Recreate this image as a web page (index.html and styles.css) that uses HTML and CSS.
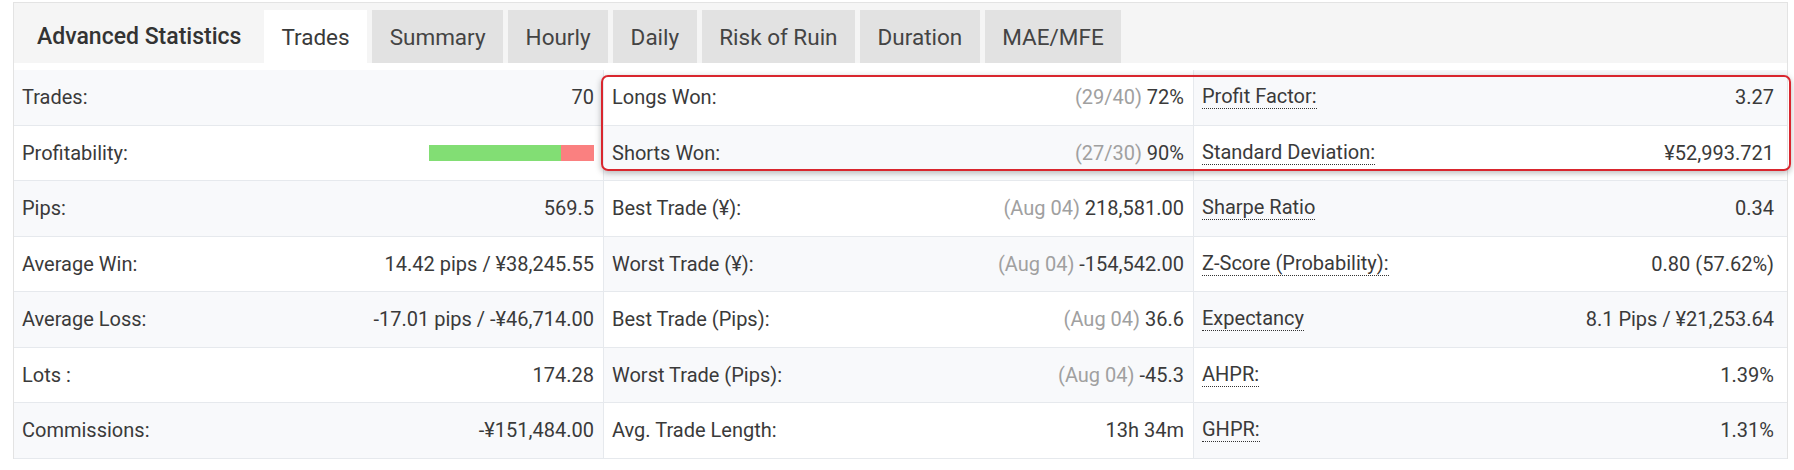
FILE: index.html
```html
<!DOCTYPE html>
<html lang="en">
<head>
<meta charset="utf-8">
<title>Advanced Statistics</title>
<link rel="stylesheet" href="styles.css">
</head>
<body>
<div class="widget">
  <div class="tabbar">
    <div class="title">Advanced Statistics</div>
    <div class="tab active">Trades</div>
    <div class="tab">Summary</div>
    <div class="tab">Hourly</div>
    <div class="tab">Daily</div>
    <div class="tab">Risk of Ruin</div>
    <div class="tab">Duration</div>
    <div class="tab">MAE/MFE</div>
  </div>
  <div class="panel">
    <div class="grid">
      <div class="cell c1 alt"><span class="lbl">Trades:</span><span class="val">70</span></div>
      <div class="cell c2"><span class="lbl">Longs Won:</span><span class="val"><span class="muted">(29/40)</span> 72%</span></div>
      <div class="cell c3 alt"><span class="lbl dotted">Profit Factor:</span><span class="val">3.27</span></div>

      <div class="cell c1"><span class="lbl">Profitability:</span><span class="bar"><span class="win" style="width:80%"></span><span class="loss" style="width:20%"></span></span></div>
      <div class="cell c2 alt"><span class="lbl">Shorts Won:</span><span class="val"><span class="muted">(27/30)</span> 90%</span></div>
      <div class="cell c3"><span class="lbl dotted">Standard Deviation:</span><span class="val">¥52,993.721</span></div>

      <div class="cell c1 alt"><span class="lbl">Pips:</span><span class="val">569.5</span></div>
      <div class="cell c2"><span class="lbl">Best Trade (¥):</span><span class="val"><span class="muted">(Aug 04)</span> 218,581.00</span></div>
      <div class="cell c3 alt"><span class="lbl dotted">Sharpe Ratio</span><span class="val">0.34</span></div>

      <div class="cell c1"><span class="lbl">Average Win:</span><span class="val">14.42 pips / ¥38,245.55</span></div>
      <div class="cell c2 alt"><span class="lbl">Worst Trade (¥):</span><span class="val"><span class="muted">(Aug 04)</span> -154,542.00</span></div>
      <div class="cell c3"><span class="lbl dotted">Z-Score (Probability):</span><span class="val">0.80 (57.62%)</span></div>

      <div class="cell c1 alt"><span class="lbl">Average Loss:</span><span class="val">-17.01 pips / -¥46,714.00</span></div>
      <div class="cell c2"><span class="lbl">Best Trade (Pips):</span><span class="val"><span class="muted">(Aug 04)</span> 36.6</span></div>
      <div class="cell c3 alt"><span class="lbl dotted">Expectancy</span><span class="val">8.1 Pips / ¥21,253.64</span></div>

      <div class="cell c1"><span class="lbl">Lots :</span><span class="val">174.28</span></div>
      <div class="cell c2 alt"><span class="lbl">Worst Trade (Pips):</span><span class="val"><span class="muted">(Aug 04)</span> -45.3</span></div>
      <div class="cell c3"><span class="lbl dotted">AHPR:</span><span class="val">1.39%</span></div>

      <div class="cell c1 alt"><span class="lbl">Commissions:</span><span class="val">-¥151,484.00</span></div>
      <div class="cell c2"><span class="lbl">Avg. Trade Length:</span><span class="val">13h 34m</span></div>
      <div class="cell c3 alt"><span class="lbl dotted">GHPR:</span><span class="val">1.31%</span></div>
    </div>
    <div class="highlight"></div>
  </div>
</div>
</body>
</html>
```

FILE: styles.css
```css
* { box-sizing: border-box; }

html, body {
  margin: 0;
  padding: 0;
  background: #ffffff;
}

body {
  font-family: Roboto, "Liberation Sans", Arial, sans-serif;
  color: #3a3a3a;
}

.widget {
  margin: 2px 0 0 13px;
  width: 1775px;
  border: 1px solid #e3e3e3;
  border-bottom: none;
}

.tabbar {
  display: flex;
  align-items: flex-end;
  gap: 5px;
  height: 60px;
  background: #f5f5f5;
}

.title {
  height: 53px;
  display: flex;
  align-items: center;
  padding: 0 17.5px 0 23px;
  font-size: 23px;
  font-weight: 500;
  color: #333;
}

.tab {
  height: 53px;
  display: flex;
  align-items: center;
  padding: 0 17.5px;
  font-size: 22.5px;
  color: #444;
  background: #e2e2e2;
}

.tab.active {
  background: #ffffff;
  color: #3a3a3a;
}

.panel {
  position: relative;
  padding-top: 7px;
  background: #ffffff;
}

.grid {
  display: grid;
  grid-template-columns: 590px 590px 1fr;
  grid-auto-rows: 55.5px;
}

.cell {
  display: flex;
  align-items: center;
  justify-content: space-between;
  padding: 0 9px 0 8px;
  font-size: 20px;
  background: #ffffff;
  border-bottom: 1px solid #e6e9ed;
}

.cell.alt { background: #f8f9fb; }

.cell.c1, .cell.c2 { border-right: 1px solid #e6e9ed; }
.cell.c2 { padding-left: 8px; }
.cell.c3 { padding-left: 8px; padding-right: 13px; }

.lbl { color: #3a3a3a; }

.dotted {
  border-bottom: 1px dotted #333;
  line-height: 1.15;
}

.val { color: #3a3a3a; white-space: nowrap; }

.muted { color: #a0a0a0; }

.bar {
  display: flex;
  width: 165px;
  height: 16px;
}

.bar .win { background: #82de74; }
.bar .loss { background: #fa8080; }

.highlight {
  position: absolute;
  left: 587px;
  top: 12px;
  width: 1190px;
  height: 96px;
  border: 2px solid #d9262e;
  border-radius: 7px;
  box-shadow: 0 2px 6px rgba(0, 0, 0, 0.28);
  pointer-events: none;
}
```
